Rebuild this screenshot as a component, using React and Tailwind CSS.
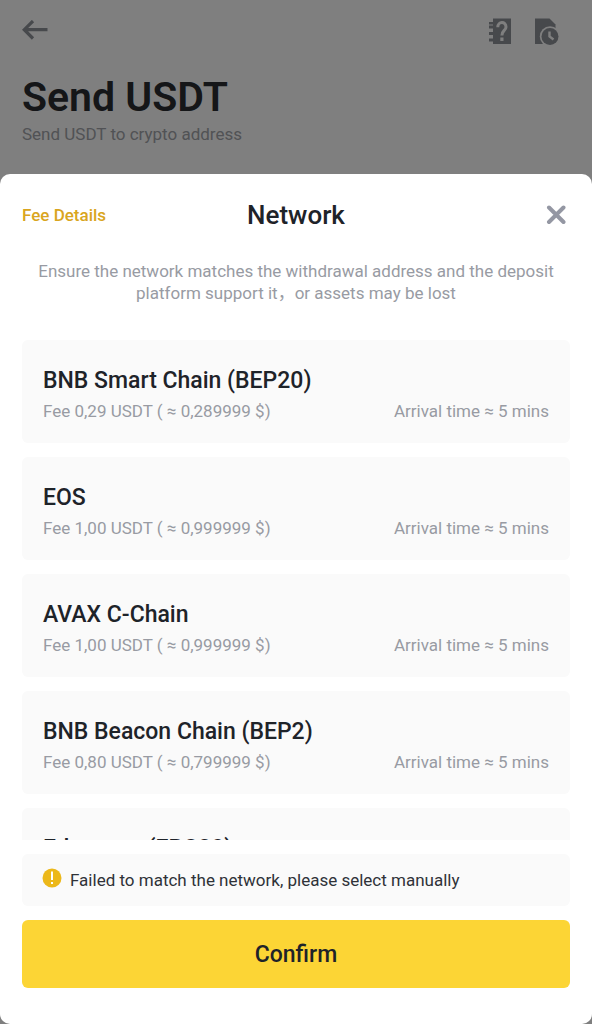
import {useState} from "react";


const networks=[
    {id:"bsc",name:"BNB Smart Chain (BEP20)",fee:"0,29",usd:"0,289999"},
    {id:"eos",name:"EOS",fee:"1,00",usd:"0,999999"},
    {id:"avax",name:"AVAX C-Chain",fee:"1,00",usd:"0,999999"},
    {id:"bnb",name:"BNB Beacon Chain (BEP2)",fee:"0,80",usd:"0,799999"},
    {id:"eth",name:"Ethereum (ERC20)",fee:"4,00",usd:"3,999999"}
];

export default function App(){

    return (
        <div className="relative flex h-screen flex-col bg-white font-['Roboto','Noto_Sans_CJK_SC',sans-serif] text-[#1e2329]">
            <SendHeader/>
            <div className="absolute inset-0 bg-black/50"></div>
            <NetworkSheet/>
        </div>
    );
}

function SendHeader(){

    return (
        <header className="h-[174px] shrink-0 px-[22px] pt-[17px] text-[#8e9299]">
            <div className="flex items-start justify-between pr-[11px]">
                <button type="button" aria-label="Back" className="pt-[3px]"><ArrowIcon/></button>
                <div className="flex items-center gap-[23px]">
                    <button type="button" aria-label="Help"><GuideIcon/></button>
                    <button type="button" aria-label="History"><HistoryIcon/></button>
                </div>
            </div>
            <h1 className="mt-7 text-[41px] leading-[48px] font-semibold text-[#2a2c30]">Send USDT</h1>
            <p className="mt-[2px] text-[17px] leading-[22px] text-[#a2a5aa]">Send USDT to crypto address</p>
        </header>
    );
}

function NetworkSheet(){

    const [selected,setSelected]=useState("");

    return (
        <section className="relative flex min-h-0 flex-1 flex-col rounded-[10px] bg-white px-[22px] pb-9">
            <div className="mt-6 grid grid-cols-3 items-center">
                <a href="#fees" className="text-[17px] leading-[22px] font-medium text-[#d9a520]">Fee Details</a>
                <h2 className="text-center text-[26px] leading-[34px] font-medium">Network</h2>
                <button type="button" aria-label="Close" className="justify-self-end pr-1"><CloseIcon/></button>
            </div>

            <p className="mt-7 text-center text-[17px] leading-[22px] text-[#989ba3]">
                Ensure the network matches the withdrawal address and the deposit platform support it，or assets may be lost
            </p>

            <ul className="mt-9 flex min-h-0 flex-1 flex-col gap-[14px] overflow-y-auto [scrollbar-width:none]">
                {networks.map((element)=>{
                    return (<NetworkCard key={element.id} network={element} selected={selected==element.id} onSelect={()=>setSelected(element.id)}/>);
                })}
            </ul>

            <div className="mt-[14px] flex h-[52px] shrink-0 items-center gap-2 rounded-md bg-[#fafafa] px-5 text-[17px] leading-[22px] text-[#2f3238]">
                <AlertIcon/>
                <p>Failed to match the network, please select manually</p>
            </div>

            <button type="button" className="mt-[14px] h-[68px] shrink-0 rounded-md bg-[#fcd535] pt-[2px] text-[23px] leading-[30px] font-medium">Confirm</button>
        </section>
    );
}

function NetworkCard(props){

    return (
        <li className="shrink-0">
            <button type="button" onClick={props.onSelect} aria-pressed={props.selected} className="flex h-[103px] w-full flex-col gap-1 rounded-md bg-[#fafafa] px-[21px] pt-[26px] text-left aria-pressed:ring-1 aria-pressed:ring-[#fcd535] aria-pressed:ring-inset">
                <span className="text-[23px] leading-[30px] font-medium">{props.network.name}</span>
                <span className="flex w-full justify-between text-[17px] leading-[22px] text-[#989ba3]">
                    <span>Fee {props.network.fee} USDT ( ≈ {props.network.usd} $)</span>
                    <span>Arrival time ≈ 5 mins</span>
                </span>
            </button>
        </li>
    );
}

function ArrowIcon(){
    return (
        <svg width="26" height="20" viewBox="0 0 26 20" fill="none" stroke="currentColor" strokeWidth="3.2">
            <path d="M25.5 9.7H2.5M11 1L2.2 9.7L11 18.5"/>
        </svg>
    );
}

function GuideIcon(){
    return (
        <svg width="24" height="28" viewBox="0 0 24 28" fill="currentColor">
            <path d="M5 1.5H23V27H5V24.5H1V21.5H5V18H1V15H5V11.5H1V8.5H5V7.5H1V5H5Z"/>
            <path d="M9.8 10.3C9.8 4 18 4.2 18 9.9C18 13.6 13.9 13.4 13.9 18.5" fill="none" stroke="#fff" strokeWidth="3"/>
            <path d="M12.3 20.5H15.5V24H12.3Z" fill="#fff"/>
        </svg>
    );
}

function HistoryIcon(){
    return (
        <svg width="24" height="28" viewBox="0 0 24 28" fill="currentColor">
            <path d="M0 1.5H14.5L20.5 7.5V27H0Z"/>
            <circle cx="15" cy="19.5" r="10.2" fill="#fff"/>
            <circle cx="15" cy="19.5" r="8.5"/>
            <path d="M14.5 14.5V19.5L18.5 22.5" fill="none" stroke="#fff" strokeWidth="2.4"/>
        </svg>
    );
}

function CloseIcon(){
    return (
        <svg width="20" height="20" viewBox="0 0 20 20" fill="none" stroke="#9497a3" strokeWidth="4" strokeLinecap="round">
            <path d="M3 2.5L17.5 17M17.5 2.5L3 17"/>
        </svg>
    );
}

function AlertIcon(){
    return (
        <svg width="20" height="24" viewBox="0 0 20 24" className="shrink-0">
            <circle cx="10" cy="10" r="9.5" fill="#ecb81a"/>
            <path d="M9 3.5H11V12H9ZM9 14H11V16H9Z" fill="#fff"/>
        </svg>
    );
}
